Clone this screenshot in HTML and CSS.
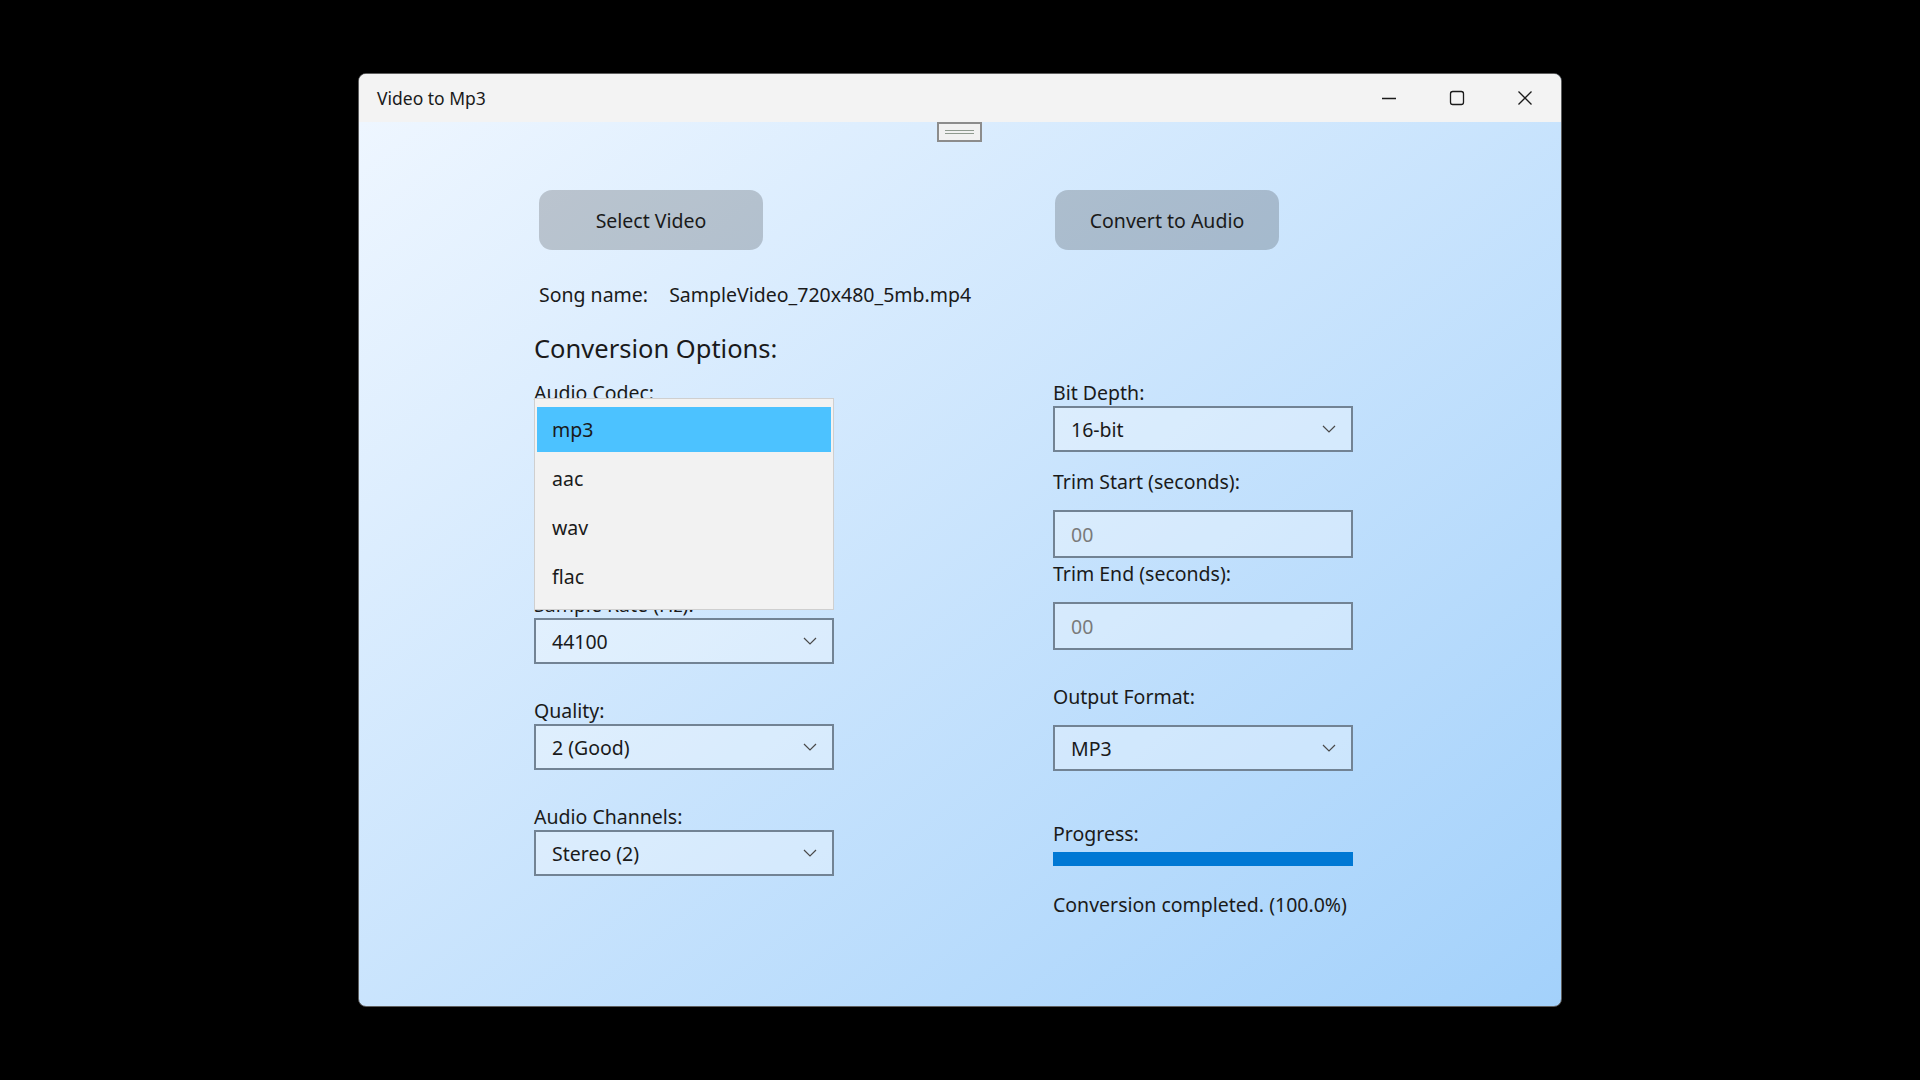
FILE: index.html
```html
<!DOCTYPE html>
<html lang="en">
<head>
    <meta charset="UTF-8">
    <title>Video to Mp3</title>
    <link rel="stylesheet" href="styles.css">
</head>
<body>
    <div class="window">
        <!-- Barra de titulo -->
        <div class="titlebar">
            <span class="title">Video to Mp3</span>
            <div class="caption-buttons">
                <div class="caption-btn">
                    <svg width="16" height="16" viewBox="0 0 16 16"><path d="M1 8.5 H15" stroke="#1a1a1a" stroke-width="1.3"/></svg>
                </div>
                <div class="caption-btn">
                    <svg width="16" height="16" viewBox="0 0 16 16"><rect x="1.5" y="1.5" width="13" height="13" rx="2.2" fill="none" stroke="#1a1a1a" stroke-width="1.3"/></svg>
                </div>
                <div class="caption-btn">
                    <svg width="16" height="16" viewBox="0 0 16 16"><path d="M1.5 1.5 L14.5 14.5 M14.5 1.5 L1.5 14.5" stroke="#1a1a1a" stroke-width="1.3"/></svg>
                </div>
            </div>
        </div>

        <div class="content">
            <div class="grip"><span></span><span></span></div>

            <div class="actions">
                <button class="action-btn">Select Video</button>
                <button class="action-btn">Convert to Audio</button>
            </div>

            <div class="song-row">
                <span>Song name:</span>
                <span class="song-file">SampleVideo_720x480_5mb.mp4</span>
            </div>

            <h2 class="section-title">Conversion Options:</h2>

            <div class="options">
                <div class="col col-left">
                    <div class="field">
                        <div class="label">Audio Codec:</div>
                        <div class="combo covered"><span>mp3</span><svg class="chevron" width="14" height="8" viewBox="0 0 14 8"><path d="M1 1 L7 7 L13 1" fill="none" stroke="#4a4a4a" stroke-width="1.2"/></svg></div>
                    </div>
                    <div class="field covered">
                        <div class="label">Bitrate (kbps):</div>
                        <div class="combo"><span>192</span><svg class="chevron" width="14" height="8" viewBox="0 0 14 8"><path d="M1 1 L7 7 L13 1" fill="none" stroke="#4a4a4a" stroke-width="1.2"/></svg></div>
                    </div>
                    <div class="field">
                        <div class="label">Sample Rate (Hz):</div>
                        <div class="combo"><span>44100</span><svg class="chevron" width="14" height="8" viewBox="0 0 14 8"><path d="M1 1 L7 7 L13 1" fill="none" stroke="#4a4a4a" stroke-width="1.2"/></svg></div>
                    </div>
                    <div class="field">
                        <div class="label">Quality:</div>
                        <div class="combo"><span>2 (Good)</span><svg class="chevron" width="14" height="8" viewBox="0 0 14 8"><path d="M1 1 L7 7 L13 1" fill="none" stroke="#4a4a4a" stroke-width="1.2"/></svg></div>
                    </div>
                    <div class="field">
                        <div class="label">Audio Channels:</div>
                        <div class="combo"><span>Stereo (2)</span><svg class="chevron" width="14" height="8" viewBox="0 0 14 8"><path d="M1 1 L7 7 L13 1" fill="none" stroke="#4a4a4a" stroke-width="1.2"/></svg></div>
                    </div>

                    <!-- Lista desplegable abierta del codec -->
                    <div class="dropdown">
                        <div class="dropdown-item selected">mp3</div>
                        <div class="dropdown-item">aac</div>
                        <div class="dropdown-item">wav</div>
                        <div class="dropdown-item">flac</div>
                    </div>
                </div>

                <div class="col col-right">
                    <div class="label">Bit Depth:</div>
                    <div class="combo"><span>16-bit</span><svg class="chevron" width="14" height="8" viewBox="0 0 14 8"><path d="M1 1 L7 7 L13 1" fill="none" stroke="#4a4a4a" stroke-width="1.2"/></svg></div>

                    <div class="label trim-start">Trim Start (seconds):</div>
                    <div class="textbox"><span>00</span></div>

                    <div class="label trim-end">Trim End (seconds):</div>
                    <div class="textbox"><span>00</span></div>

                    <div class="label output-label">Output Format:</div>
                    <div class="combo"><span>MP3</span><svg class="chevron" width="14" height="8" viewBox="0 0 14 8"><path d="M1 1 L7 7 L13 1" fill="none" stroke="#4a4a4a" stroke-width="1.2"/></svg></div>

                    <div class="label progress-label">Progress:</div>
                    <div class="progress"><div class="progress-fill" style="width: 100%"></div></div>

                    <div class="status">Conversion completed. (100.0%)</div>
                </div>
            </div>
        </div>
    </div>
</body>
</html>
```

FILE: styles.css
```css
body {
    margin: 0;
    padding: 0;
    background: #000;
    height: 100vh;
    display: flex;
    justify-content: center;
    align-items: center;
    font-family: 'Noto Sans', 'Open Sans', sans-serif;
    color: #1a1a1a;
}
.window {
    width: 1204px;
    height: 934px;
    box-sizing: border-box;
    border: 1px solid #5e5e5e;
    border-radius: 8px;
    overflow: hidden;
    display: flex;
    flex-direction: column;
    background: linear-gradient(to bottom right, #f0f7ff, #a3d1fb);
}
.titlebar {
    height: 48px;
    flex-shrink: 0;
    background: #f3f3f3;
    display: flex;
    align-items: center;
    justify-content: space-between;
}
.title {
    padding-left: 18px;
    font-size: 17.5px;
    color: #1a1a1a;
}
.caption-buttons {
    display: flex;
    height: 100%;
    padding-right: 2px;
}
.caption-btn {
    width: 68px;
    height: 100%;
    display: flex;
    align-items: center;
    justify-content: center;
}
.content {
    position: relative;
    flex: 1;
}
.grip {
    position: absolute;
    top: 0;
    left: 578px;
    width: 45px;
    height: 20px;
    box-sizing: border-box;
    border: 2px solid #8c8c8c;
    background: #f1f1f1;
    display: flex;
    flex-direction: column;
    justify-content: center;
    align-items: center;
    gap: 2px;
}
.grip span {
    display: block;
    width: 29px;
    height: 1px;
    background: #8f9a8f;
}
.actions {
    display: flex;
    gap: 292px;
    margin-top: 68px;
    padding-left: 180px;
}
.action-btn {
    width: 224px;
    height: 60px;
    border: none;
    border-radius: 13px;
    background: rgba(0, 0, 0, 0.19);
    font-family: 'Noto Sans', sans-serif;
    font-size: 19.5px;
    color: #1a1a1a;
    cursor: pointer;
}
.song-row {
    margin-top: 32px;
    padding-left: 180px;
    font-size: 19.5px;
    line-height: 26px;
}
.song-file {
    margin-left: 16px;
}
.section-title {
    margin: 23px 0 0 0;
    padding-left: 175px;
    font-size: 25.5px;
    font-weight: normal;
    line-height: 34px;
}
.options {
    display: flex;
    gap: 219px;
    margin-top: 15px;
    padding-left: 175px;
}
.col {
    width: 300px;
    display: flex;
    flex-direction: column;
}
.col-left {
    position: relative;
    gap: 34px;
}
.label {
    font-size: 19.5px;
    line-height: 26px;
}
.combo, .textbox {
    height: 46px;
    box-sizing: border-box;
    border: 2px solid #728394;
    background: rgba(255, 255, 255, 0.32);
    display: flex;
    align-items: center;
    justify-content: space-between;
    padding: 0 15px 0 16px;
    font-size: 19.5px;
}
.textbox {
    height: 48px;
    color: #7a7a7a;
}
.covered {
    visibility: hidden;
}
.chevron {
    display: block;
}
.trim-start {
    margin-top: 17px;
    margin-bottom: 15px;
}
.trim-end {
    margin-top: 3px;
    margin-bottom: 15px;
}
.output-label {
    margin-top: 34px;
    margin-bottom: 15px;
}
.progress-label {
    margin-top: 50px;
    margin-bottom: 5px;
}
.progress {
    height: 14px;
    background: #e6e6e6;
}
.progress-fill {
    height: 100%;
    background: #0078d4;
}
.status {
    margin-top: 26px;
    font-size: 19.5px;
    line-height: 26px;
}
.dropdown {
    position: absolute;
    top: 18px;
    left: 0;
    width: 300px;
    height: 212px;
    box-sizing: border-box;
    padding: 8px 2px 6px;
    background: #f2f2f2;
    border: 1px solid #cfcfcf;
    display: flex;
    flex-direction: column;
    gap: 4px;
    z-index: 5;
}
.dropdown-item {
    height: 45px;
    flex-shrink: 0;
    padding-left: 15px;
    display: flex;
    align-items: center;
    font-size: 19.5px;
}
.dropdown-item.selected {
    background: #4cc2ff;
}
```
